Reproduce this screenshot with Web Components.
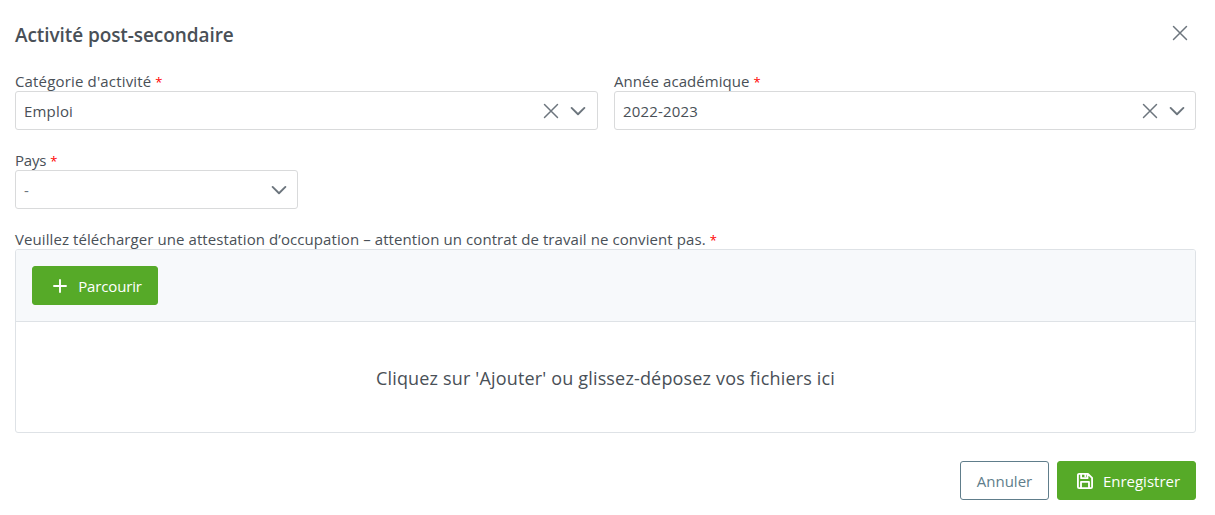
<!DOCTYPE html>
<html lang="fr">
<head>
<meta charset="utf-8">
<title>Activité post-secondaire</title>
<style>
body{margin:0;background:#fff;color:#495057;font:15px/20px "Open Sans","Noto Sans",sans-serif}
</style>
</head>
<body>
<activity-dialog></activity-dialog>
<script>
const define = (name, html) => customElements.define(name, class extends HTMLElement {
  constructor() {
    super();
    const t = document.createElement('template');
    t.innerHTML = html;
    this.attachShadow({mode: 'open'}).append(t.content.cloneNode(true));
  }
});

const paths = {
  times: '<path d="M.5.5 13.5 13.5M13.5.5.5 13.5" stroke-width="1.45"/>',
  chevron: '<path d="M.6 3.9 7 10.2 13.4 3.9" stroke-width="1.9"/>',
  plus: '<path d="M7 1v12M1 7h12" stroke-width="1.9"/>',
  save: '<path d="M1.8.8h7.8l3.6 3.5v7.9a1 1 0 0 1-1 1H1.8a1 1 0 0 1-1-1V1.8a1 1 0 0 1 1-1ZM3.6.8v3.7h5.6V.8M3.5 13V7.8h7V13" stroke-width="1.6"/><path d="M7.2 1.2v2" stroke-width="1.4"/>'
};
customElements.define('ui-icon', class extends HTMLElement {
  connectedCallback() {
    if (this.shadowRoot) return;
    this.attachShadow({mode: 'open'}).innerHTML = `<style>
      :host{display:block;flex:none;width:14px;height:14px}
      svg{display:block;width:100%;height:100%;overflow:visible;fill:none;stroke:currentColor;stroke-linecap:round;stroke-linejoin:round}
    </style><svg viewBox="0 0 14 14">${paths[this.getAttribute('name')]}</svg>`;
  }
});

define('form-field', `<style>
  :host{display:block;min-width:0}
  .label{display:block;height:20px;white-space:nowrap;line-height:21px}
  .text{letter-spacing:var(--ls,0)}
  .req{color:#f00;margin-left:4px;font-size:13px;line-height:1}
</style><div class="label"><span class="text"><slot name="label"></slot></span><span class="req">*</span></div><slot></slot>`);

define('select-box', `<style>
  :host{display:flex;align-items:center;box-sizing:border-box;height:39px;padding:0 12px 0 8px;border:1px solid #d9dadb;border-radius:3px;background:#fff}
  .value{flex:1;letter-spacing:.18px;line-height:20px;padding-top:1px}
  :host([placeholder]) .value{color:#6c757d}
  .icons{display:flex;gap:13px;color:#6c757d}
</style><span class="value"><slot></slot></span><span class="icons"><slot name="clear"></slot><ui-icon name="chevron"></ui-icon></span>`);

define('ui-button', `<style>
  :host{display:flex;align-items:center;justify-content:center;box-sizing:border-box;height:39px;border:1px solid #56aa28;border-radius:3px;background:#56aa28;color:#fff;letter-spacing:var(--ls,0)}
  :host([outlined]){background:#fff;border-color:#607d8b;color:#607d8b}
  .text{line-height:20px;padding-top:1px}
</style><slot name="icon"></slot><span class="text"><slot></slot></span>`);

define('file-upload', `<style>
  :host{display:block;box-sizing:border-box;height:184px;border:1px solid #dee2e6;border-radius:3px;overflow:hidden}
  .bar{display:flex;box-sizing:border-box;height:72px;padding:16px;background:#f7f9fb;border-bottom:1px solid #dee2e6}
  ui-button{width:126px;padding-left:5px;--ls:-.15px}
  ui-icon{margin-right:11px}
  .drop{display:flex;align-items:center;justify-content:center;height:112px;font-size:18px;line-height:26px;letter-spacing:.165px}
</style>
<div class="bar"><ui-button><ui-icon slot="icon" name="plus"></ui-icon>Parcourir</ui-button></div>
<div class="drop"><span>Cliquez sur 'Ajouter' ou glissez-déposez vos fichiers ici</span></div>`);

define('activity-dialog', `<style>
  :host{display:flex;flex-direction:column;box-sizing:border-box;height:515px;padding:19px 19px 15px 15px}
  header{display:flex;justify-content:space-between;height:52px}
  h1{margin:0;font-size:19px;line-height:32px;font-weight:600;letter-spacing:-.08px}
  header ui-icon{margin:7px 9px 0 0;color:#6c757d}
  .row{display:grid;grid-template-columns:583px 582px;gap:16px}
  .row + .row{margin-top:20px;grid-template-columns:283px}
  .category{--ls:.16px}.year{--ls:.06px}.country{--ls:-.2px}
  .year select-box,.country select-box{padding-right:11px}
  .doc{margin-top:20px;--ls:.083px}
  footer{display:flex;justify-content:flex-end;gap:8px;margin-top:28px}
  .cancel{width:89px}
  .save{width:139px;padding-left:4px}
  .save ui-icon{width:16px;height:16px;margin-right:10px}
</style>
<header><h1>Activité post-secondaire</h1><ui-icon name="times"></ui-icon></header>
<div class="row">
  <form-field class="category"><span slot="label">Catégorie d'activité</span><select-box>Emploi<ui-icon slot="clear" name="times"></ui-icon></select-box></form-field>
  <form-field class="year"><span slot="label">Année académique</span><select-box>2022-2023<ui-icon slot="clear" name="times"></ui-icon></select-box></form-field>
</div>
<div class="row"><form-field class="country"><span slot="label">Pays</span><select-box placeholder>-</select-box></form-field></div>
<form-field class="doc"><span slot="label">Veuillez télécharger une attestation d’occupation – attention un contrat de travail ne convient pas.</span><file-upload></file-upload></form-field>
<footer><ui-button class="cancel" outlined>Annuler</ui-button><ui-button class="save"><ui-icon slot="icon" name="save"></ui-icon>Enregistrer</ui-button></footer>`);
</script>
</body>
</html>
